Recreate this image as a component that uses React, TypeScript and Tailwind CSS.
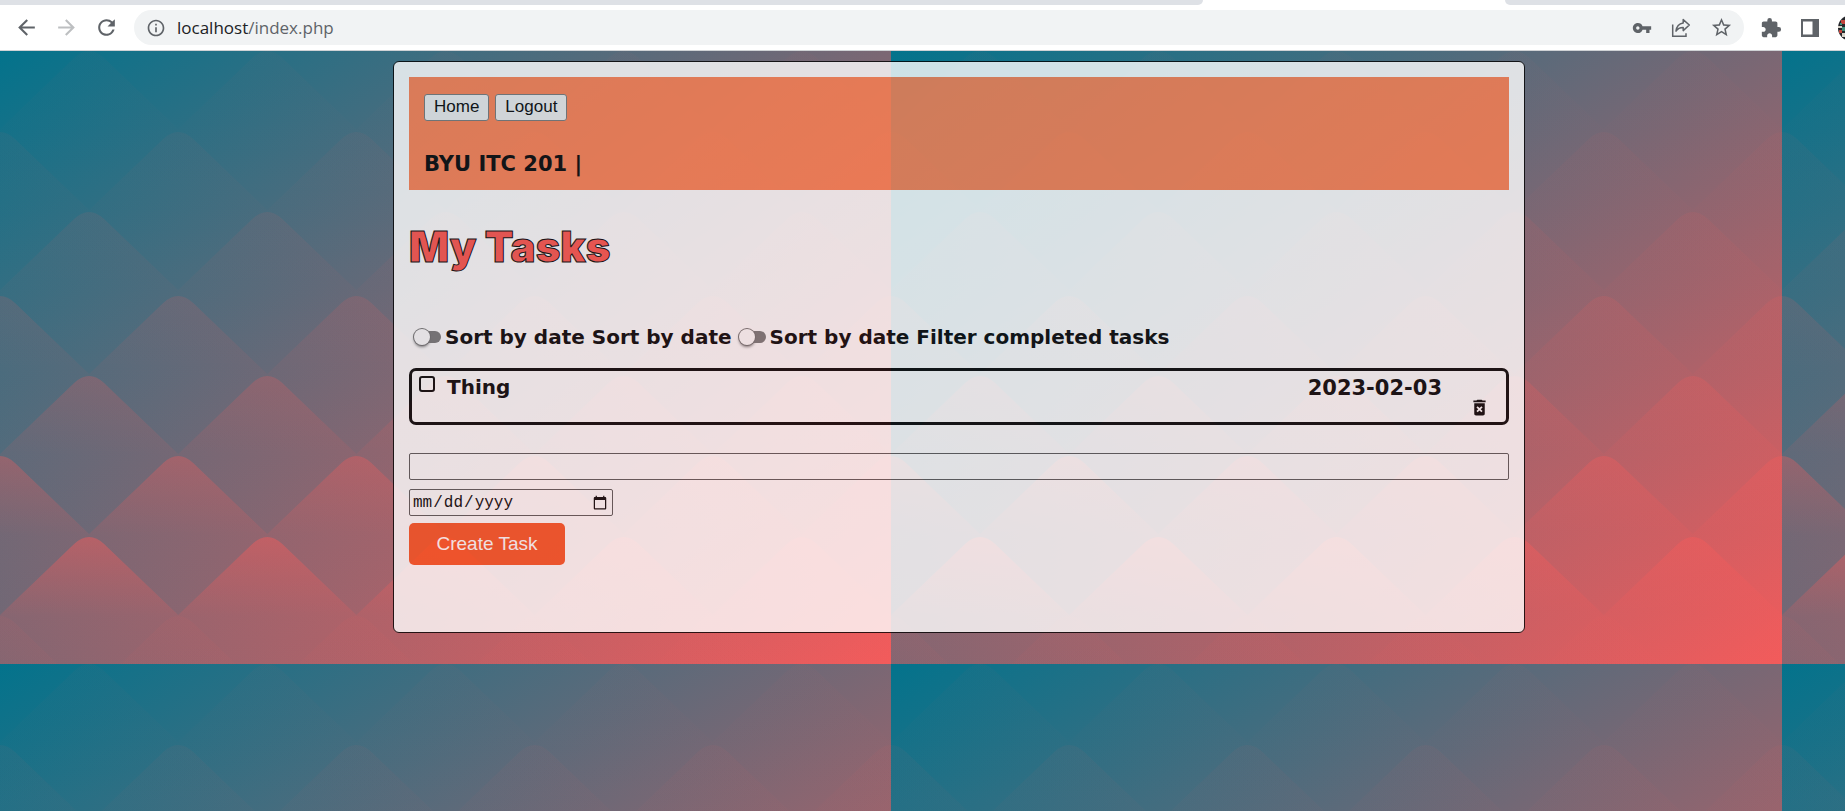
import React from "react";
import {
  MdArrowBack,
  MdArrowForward,
  MdRefresh,
  MdInfoOutline,
  MdVpnKey,
  MdStarBorder,
  MdExtension,
  MdDeleteForever,
} from "react-icons/md";

const TILE_W = 891;
const TILE_H = 613;
const STEP = TILE_W / 5;

const ridges = [
  { y: 0, shifted: true, strength: 0.03 },
  { y: 81, shifted: false, strength: 0.05 },
  { y: 161, shifted: true, strength: 0.09 },
  { y: 245, shifted: false, strength: 0.15 },
  { y: 325, shifted: true, strength: 0.24 },
  { y: 405, shifted: false, strength: 0.36 },
  { y: 486, shifted: true, strength: 0.48 },
  { y: 565, shifted: false, strength: 0.06 },
];

function ridgePath(y: number, shifted: boolean) {
  const half = STEP / 2;
  const first = shifted ? -half : 0;
  let d = `M${first - half} ${y + 78}`;
  for (let i = 0; i < 7; i++) {
    const x = first + i * STEP;
    d += ` L${x - 15} ${y + 7} Q${x} ${y - 7} ${x + 15} ${y + 7} L${x + half} ${y + 78}`;
  }
  return `${d} V${y + 230} H${first - half} Z`;
}

function PeaksBackground() {
  return (
    <svg className="absolute inset-0 h-full w-full" aria-hidden="true">
      <defs>
        <linearGradient id="base" x1="0" y1="0" x2="1" y2="1">
          <stop offset="0" stopColor="#03738c" />
          <stop offset="1" stopColor="#f35b5b" />
        </linearGradient>
        {ridges.map((r, i) => (
          <linearGradient
            key={i}
            id={`ridge${i}`}
            gradientUnits="userSpaceOnUse"
            x1="0"
            y1={r.y}
            x2="0"
            y2={r.y + 160}
          >
            <stop offset="0" stopColor="#f35b5b" stopOpacity={r.strength} />
            <stop offset="0.5" stopColor="#f35b5b" stopOpacity={r.strength * 0.32} />
            <stop offset="1" stopColor="#f35b5b" stopOpacity="0" />
          </linearGradient>
        ))}
        <pattern id="peaks" width={TILE_W} height={TILE_H} patternUnits="userSpaceOnUse">
          <rect width={TILE_W} height={TILE_H} fill="url(#base)" />
          {ridges.map((r, i) => (
            <path key={i} d={ridgePath(r.y, r.shifted)} fill={`url(#ridge${i})`} />
          ))}
        </pattern>
      </defs>
      <rect width="100%" height="100%" fill="url(#peaks)" />
    </svg>
  );
}

function ShareIcon() {
  return (
    <svg width="22" height="22" viewBox="0 0 22 22" fill="none" stroke="#5f6368" strokeWidth="1.5">
      <path d="M2.7 7.5V19.2H16V16.2" />
      <path d="M13.2 2.6 19.3 8l-6.1 5.6v-3.2c-3.300 0-5.600 1-7.200 3.800.5-4.600 3-7.600 7.200-8.200z" strokeLinejoin="round" />
    </svg>
  );
}

function SidePanelIcon() {
  return (
    <svg width="18" height="18" viewBox="0 0 18 18">
      <path fill="#5f6368" fillRule="evenodd" d="M0 0h18v18H0zM2 2.500h9.500v13H2z" />
    </svg>
  );
}

function Avatar() {
  return (
    <svg width="26" height="26" viewBox="0 0 26 26" className="-mr-[19px] shrink-0">
      <circle cx="13" cy="13" r="13" fill="#25262b" />
      <path d="M3 5h4v4H3zM1 15h3v3H1z" fill="#c2453c" />
      <path d="M0 11h4v2H0zM4 18h3v4H4z" fill="#d8d3c8" />
      <path d="M4 12h3v4H4zM2 8h2v2H2z" fill="#3f8f78" />
    </svg>
  );
}

function BrowserBar() {
  return (
    <header className="relative bg-white">
      <div className="flex h-[5px] bg-white">
        <div className="h-[5px] w-[1203px] rounded-br-[8px] bg-[#dee1e6]" />
        <div className="ml-[302px] h-[5px] flex-1 rounded-bl-[8px] bg-[#dee1e6]" />
      </div>
      <div className="flex h-[46px] items-center overflow-hidden border-b border-[#cfd2d5] pl-[14px] text-[#5f6368]">
        <nav className="flex gap-[15px] pr-[15px]" aria-label="Browser">
          <button aria-label="Back"><MdArrowBack size={25} /></button>
          <button aria-label="Forward" className="text-[#bdbfc1]"><MdArrowForward size={25} /></button>
          <button aria-label="Reload"><MdRefresh size={25} /></button>
        </nav>
        <div className="flex h-[35px] min-w-0 flex-1 items-center rounded-full bg-[#f1f3f4] pr-[11px] pl-3">
          <MdInfoOutline size={20} />
          <p className="ml-[11px] flex-1 font-['Open_Sans',sans-serif] text-[17px] leading-6">
            <span className="text-[#202124]">localhost</span>/index.php
          </p>
          <div className="flex items-center gap-[18px]">
            <button aria-label="Passwords"><MdVpnKey size={20} /></button>
            <button aria-label="Share"><ShareIcon /></button>
            <button aria-label="Bookmark"><MdStarBorder size={23} /></button>
          </div>
        </div>
        <div className="flex items-center gap-[19px] pl-4">
          <button aria-label="Extensions"><MdExtension size={22} /></button>
          <button aria-label="Side panel"><SidePanelIcon /></button>
          <Avatar />
        </div>
      </div>
    </header>
  );
}

function Toggle({ id, label }: { id: string; label: string }) {
  return (
    <div className="flex items-center">
      <input
        id={id}
        type="checkbox"
        className="relative mr-1 ml-[5px] h-3 w-[27px] appearance-none rounded-full bg-[#757575] before:absolute before:-top-[2px] before:left-0 before:h-4 before:w-4 before:rounded-full before:bg-white before:shadow-[0_0_0_1px_#6c6c6c,0_2px_3px_#777] before:content-['']"
      />
      <label htmlFor={id}>{label}</label>
    </div>
  );
}

const navButton =
  "h-[27px] rounded-[3px] border border-[#767676] bg-[#efefef] px-[9px] pb-[2px] font-['Liberation_Sans',sans-serif] text-[17px] leading-6";

export default function App() {
  return (
    <div className="flex min-h-screen flex-col overflow-hidden font-['DejaVu_Sans',sans-serif] text-black">
      <BrowserBar />
      <div className="relative flex-1 pt-[10px] pr-[320px] pb-10 pl-[393px]">
        <PeaksBackground />
        <main className="relative rounded-[6px] border border-black bg-white px-[15px] pt-[15px] pb-[67px] opacity-80">
          <div className="bg-[#ff7f50] px-[15px] pt-[17px] pb-[14px]">
            <div className="flex gap-[6px]">
              <button className={navButton}>Home</button>
              <button className={navButton}>Logout</button>
            </div>
            <h2 className="mt-[31px] text-[21px] leading-6 font-bold">BYU ITC 201 |</h2>
          </div>

          <h1 className="mt-[29px] font-['Inter',sans-serif] text-[42px] leading-[56px] font-black text-[#ff5149] [-webkit-text-stroke:1px_black]">
            My Tasks
          </h1>

          <div className="mt-[50px] flex gap-[2px] text-[20px] leading-6 font-bold">
            <Toggle id="sort" label="Sort by date Sort by date" />
            <Toggle id="filter" label="Sort by date Filter completed tasks" />
          </div>

          <ul className="mt-[19px]">
            <li className="flex h-[57px] rounded-[7px] border-[3px] border-black pr-4 pl-[7px] text-[20px] leading-6 font-bold">
              <input
                id="thing"
                type="checkbox"
                className="mt-[5px] h-4 w-4 appearance-none rounded-[3px] border-2 border-black"
              />
              <label htmlFor="thing" className="ml-3 flex-1 pt-1">Thing</label>
              <time dateTime="2023-02-03" className="pt-[5px] text-[21px]">2023-02-03</time>
              <button aria-label="Delete task" className="ml-[27px] self-end pb-[4px]">
                <MdDeleteForever size={21} />
              </button>
            </li>
          </ul>

          <form className="mt-7 flex flex-col items-start" onSubmit={(e) => e.preventDefault()}>
            <input
              type="text"
              aria-label="Task"
              className="h-[27px] w-full rounded-[2px] border border-[#555] px-1"
            />
            <input
              type="date"
              aria-label="Due date"
              className="mt-[9px] h-[27px] w-[204px] rounded-[2px] border border-[#555] px-[2px] font-['Liberation_Mono',monospace] text-[16px]"
            />
            <button className="mt-[7px] h-[42px] w-[156px] rounded-[5px] bg-[#f8511f] font-['Liberation_Sans',sans-serif] text-[19px] text-white">
              Create Task
            </button>
          </form>
        </main>
      </div>
    </div>
  );
}
